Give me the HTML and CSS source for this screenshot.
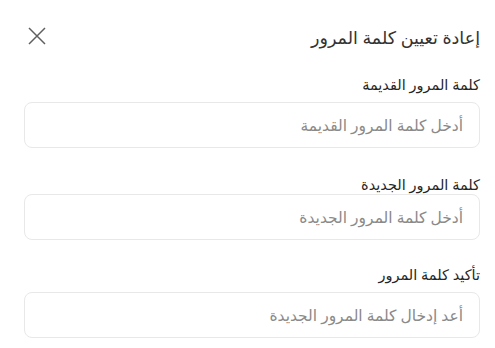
FILE: index.html
```html
<!DOCTYPE html>
<html lang="ar" dir="rtl">
<head>
<meta charset="utf-8">
<link rel="stylesheet" href="styles.css">
</head>
<body>
<div class="dialog">
  <div class="header">
    <h1 class="title">إعادة تعيين كلمة المرور</h1>
    <button class="close" aria-label="إغلاق">
      <svg width="18" height="18" viewBox="0 0 18 18"><path d="M1 1 L17 17 M17 1 L1 17" stroke="#5f5f5f" stroke-width="1.5" fill="none"/></svg>
    </button>
  </div>
  <div class="field first">
    <label class="label">كلمة المرور القديمة</label>
    <div class="input">أدخل كلمة المرور القديمة</div>
  </div>
  <div class="field second">
    <label class="label">كلمة المرور الجديدة</label>
    <div class="input">أدخل كلمة المرور الجديدة</div>
  </div>
  <div class="field third">
    <label class="label">تأكيد كلمة المرور</label>
    <div class="input">أعد إدخال كلمة المرور الجديدة</div>
  </div>
</div>
</body>
</html>
```
FILE: styles.css
```css
html, body { margin: 0; padding: 0; background: #fff; }
body { font-family: "Noto Sans", "DejaVu Sans", sans-serif; color: #222; }
.dialog { padding: 24px 15px 0 24px; display: flex; flex-direction: column; }
.header { display: flex; justify-content: space-between; align-items: center; height: 26px; margin-bottom: 24px; }
.title { margin: 0; font-size: 17.5px; font-weight: 400; color: #333; }
.close { background: none; border: 0; padding: 0; margin-left: 4px; margin-top: -2px; width: 18px; height: 18px; display: flex; }
.field { display: flex; flex-direction: column; gap: 8px; }
.second { margin-top: 26px; gap: 0; }
.third { margin-top: 24px; }
.label { font-size: 14.5px; color: #262626; line-height: 20px; }
.input { height: 44px; border: 1px solid #e8e8e8; border-radius: 8px; box-sizing: content-box; padding: 0 16px; display: flex; align-items: center; font-size: 15.5px; color: #8a8a8a; }
```
